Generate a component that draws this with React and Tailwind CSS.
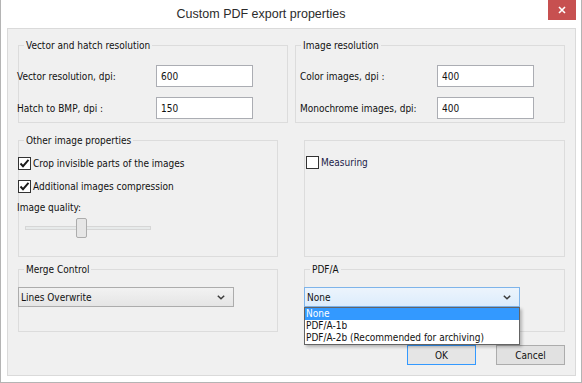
import { useState } from 'react';

function GroupBox({ title, className, children }) {
  return (
    <div className={`border border-[#dcdcdc] flex flex-col ${className}`}>
      {title ? (
        <div className="-mt-[7px] ml-[5px] px-[2px] w-fit bg-[#f0f0f0] leading-[13px]">{title}</div>
      ) : null}
      {children}
    </div>
  );
}

function Check({ checked }) {
  return (
    <div className="w-[13px] h-[13px] border border-[#333333] bg-white flex items-center justify-center shrink-0">
      {checked && (
        <svg width="11" height="11" viewBox="0 0 11 11">
          <path d="M1.5 5.5 L4 8.2 L9.5 1.8" fill="none" stroke="#1a1a1a" strokeWidth="1.9" />
        </svg>
      )}
    </div>
  );
}

function Chevron() {
  return (
    <svg width="8" height="5" viewBox="0 0 8 5" className="shrink-0">
      <path d="M0.8 0.8 L4 3.8 L7.2 0.8" fill="none" stroke="#3c3c3c" strokeWidth="1.5" />
    </svg>
  );
}

function Field({ label, value, labelWidth, labelShift }) {
  return (
    <div className={`flex items-center ${labelShift}`}>
      <div className={`${labelWidth} leading-[13px]`}>{label}</div>
      <div className="w-[97px] h-[22px] border border-[#abadb3] bg-white pl-[4px] flex items-center">{value}</div>
    </div>
  );
}

export default function App() {
  const [open] = useState(true);

  return (
    <div className="w-[582px] h-[383px] bg-white border-x border-b border-[#b4b4b4] flex flex-col text-[10px] text-[#111] font-['DejaVu_Sans_Condensed','DejaVu_Sans',sans-serif] font-stretch-condensed">
      {/* title bar */}
      <div className="h-[28px] flex items-start shrink-0">
        <div className="flex-1 flex justify-center pt-[6px] pr-[27px] text-[12.5px] leading-[16px] text-[#2b2b2b] font-['Liberation_Sans',sans-serif] font-stretch-normal">
          Custom PDF export properties
        </div>
        <div className="w-[28px] h-[20px] bg-[#c75050] mr-[5px] flex items-center justify-center">
          <svg width="8" height="8" viewBox="0 0 8 8">
            <path d="M1 1 L7 7 M7 1 L1 7" stroke="white" strokeWidth="1.6" />
          </svg>
        </div>
      </div>

      {/* dialog body */}
      <div className="ml-[6px] mr-[5px] h-[348px] bg-[#f0f0f0] border border-[#dadada] flex flex-col pl-[10px]">
        <div className="flex gap-[7px] mt-[16px]">
          <GroupBox title="Vector and hatch resolution" className="w-[270px] h-[78px]">
            <div className="mt-[13px] flex flex-col gap-[10px]">
              <Field label="Vector resolution, dpi:" value="600" labelWidth="w-[139px]" labelShift="-ml-[2px]" />
              <Field label="Hatch to BMP, dpi :" value="150" labelWidth="w-[139px]" labelShift="-ml-[2px]" />
            </div>
          </GroupBox>
          <GroupBox title="Image resolution" className="w-[270px] h-[78px]">
            <div className="mt-[13px] flex flex-col gap-[10px]">
              <Field label="Color images, dpi :" value="400" labelWidth="w-[137px]" labelShift="ml-[4px]" />
              <Field label="Monochrome images, dpi:" value="400" labelWidth="w-[137px]" labelShift="ml-[4px]" />
            </div>
          </GroupBox>
        </div>

        <div className="flex gap-[26px] mt-[17px]">
          <GroupBox title="Other image properties" className="w-[260px] h-[117px]">
            <div className="mt-[10px] -ml-[1px] flex flex-col gap-[10px]">
              <div className="flex items-center gap-[2px] leading-[13px]">
                <Check checked />
                <span>Crop invisible parts of the images</span>
              </div>
              <div className="flex items-center gap-[2px] leading-[13px]">
                <Check checked />
                <span>Additional images compression</span>
              </div>
            </div>
            <div className="mt-[8px] -ml-[2px] leading-[13px]">Image quality:</div>
            <div className="mt-[4px] ml-[6px] w-[126px] h-[20px] relative flex items-center">
              <div className="w-full h-[4px] bg-[#e7eaea] border border-[#d6d6d6]"></div>
              <div className="absolute left-[51px] top-0 w-[11px] h-[20px] bg-[#e6e6e6] border border-[#acacac] rounded-[2px]"></div>
            </div>
          </GroupBox>
          <GroupBox className="w-[261px] h-[117px]">
            <div className="mt-[15px] ml-[1px] flex items-center gap-[2px] leading-[13px]">
              <Check />
              <span className="text-[#1c1c4a]">Measuring</span>
            </div>
          </GroupBox>
        </div>

        <div className="flex gap-[26px] mt-[12px]">
          <GroupBox title="Merge Control" className="w-[260px] h-[63px]">
            <div className="mt-[11px] -ml-[1px] w-[216px] h-[20px] border border-[#acacac] bg-gradient-to-b from-[#f2f2f2] to-[#e5e5e5] flex items-center justify-between pl-[2px] pr-[8px]">
              <span>Lines Overwrite</span>
              <Chevron />
            </div>
          </GroupBox>
          <GroupBox title="PDF/A" className="w-[261px] h-[63px]">
            <div className="mt-[11px] -ml-[1px] w-[216px] relative">
              <div className="h-[20px] border border-[#7eb4ea] bg-gradient-to-b from-[#ecf4fc] to-[#dcecfc] flex items-center justify-between pl-[2px] pr-[8px]">
                <span>None</span>
                <Chevron />
              </div>
              {open && (
                <div className="absolute left-0 top-full w-full border border-[#646464] bg-white shadow-[2px_2px_3px_rgba(0,0,0,0.25)] z-10 flex flex-col leading-[12px]">
                  <div className="bg-[#3399ff] text-white pl-[1px]">None</div>
                  <div className="pl-[1px]">PDF/A-1b</div>
                  <div className="pl-[1px]">PDF/A-2b (Recommended for archiving)</div>
                </div>
              )}
            </div>
          </GroupBox>
        </div>

        <div className="flex justify-end gap-[20px] mt-[13px] mr-[10px]">
          <div className="w-[69px] h-[20px] border border-[#3399ff] bg-[#e5e5e5] flex items-center justify-center">OK</div>
          <div className="w-[69px] h-[20px] border border-[#acacac] bg-[#e1e1e1] flex items-center justify-center">Cancel</div>
        </div>
      </div>
    </div>
  );
}
